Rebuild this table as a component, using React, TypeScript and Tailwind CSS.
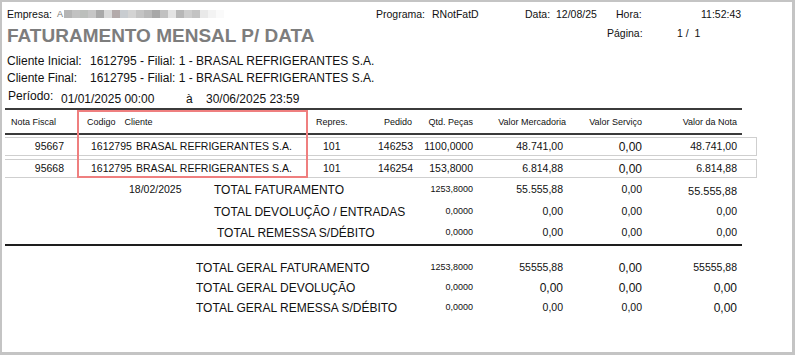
import React from 'react';

const mosaic = [
  '#b5b5b5', '#c2c2c2', '#bcbfbc', '#c6c6c6', '#a9a9a9', '#d9d9d9', '#b3aaaa',
  '#c8ccd0', '#d3d3d3', '#c4c4c4', '#b9b9b9', '#a8a8a8', '#c1c1c1', '#e3e3e3', '#b7b7b7',
  '#cdcdcd', '#c3c3c3', '#e9e9e9', '#f3f3f3', '#fafafa',
];

const rows = [
  { nf: '95667', cod: '1612795', cliente: 'BRASAL REFRIGERANTES S.A.', rep: '101', pedido: '146253', qtd: '1100,0000', merc: '48.741,00', serv: '0,00', nota: '48.741,00' },
  { nf: '95668', cod: '1612795', cliente: 'BRASAL REFRIGERANTES S.A.', rep: '101', pedido: '146254', qtd: '153,8000', merc: '6.814,88', serv: '0,00', nota: '6.814,88' },
];

interface ValuesProps {
  qtd: string;
  merc: string;
  serv: string;
  nota: string;
  mercSize?: string;
  servSize?: string;
  notaSize?: string;
}

const TotalValues: React.FC<ValuesProps> = ({ qtd, merc, serv, nota, mercSize = 'text-[10.5px]', servSize = 'text-[10.5px]', notaSize = 'text-[10.5px]' }) => (
  <>
    <div className="w-[60px] pr-[3px] text-right text-[9px]">{qtd}</div>
    <div className={`w-[92px] pr-[5px] text-right ${mercSize}`}>{merc}</div>
    <div className={`w-[76px] pr-[2px] text-right ${servSize}`}>{serv}</div>
    <div className={`w-[96px] pr-[3px] text-right ${notaSize}`}>{nota}</div>
  </>
);

export default function App() {
  return (
    <div className="w-[795px] h-[355px] bg-[#c4c4c4] pt-[2px] pl-[2px] pr-[3px] pb-[3px] font-['Liberation_Sans',Arial,sans-serif] text-[#111]">
      <div className="relative w-full h-full bg-white pl-[3px] overflow-hidden">
        {/* cabeçalho */}
        <div className="mt-[6px] pl-[2px] flex items-center h-[12px] text-[10.5px] leading-none whitespace-nowrap">
          <div className="w-[50px]">Empresa:</div>
          <div className="w-[319px] flex items-center">
            <span className="text-[9px] text-[#777] mr-[1px]">A</span>
            {mosaic.map((c, i) => (
              <div key={i} className="w-[8px] h-[8px]" style={{ backgroundColor: c }} />
            ))}
          </div>
          <div className="w-[56px]">Programa:</div>
          <div className="w-[93px]">RNotFatD</div>
          <div className="w-[31px]">Data:</div>
          <div className="w-[60px]">12/08/25</div>
          <div className="w-[85px]">Hora:</div>
          <div>11:52:43</div>
        </div>

        <div className="mt-[5px] pl-[2px] flex items-center h-[20px] whitespace-nowrap">
          <div className="w-[600px] text-[19px] font-bold text-[#7d7d7d] leading-none">FATURAMENTO MENSAL P/ DATA</div>
          <div className="w-[70px] text-[10.5px] -mt-[2px]">Página:</div>
          <div className="text-[10.5px] -mt-[2px] whitespace-pre">{'1 /  1'}</div>
        </div>

        <div className="mt-[9px] pl-[2px] flex items-center h-[14px] text-[12px] whitespace-nowrap">
          <div className="w-[83px]">Cliente Inicial:</div>
          <div>1612795 - Filial: 1 - BRASAL REFRIGERANTES S.A.</div>
        </div>
        <div className="mt-[3px] pl-[2px] flex items-center h-[14px] text-[12px] whitespace-nowrap">
          <div className="w-[83px]">Cliente Final:</div>
          <div>1612795 - Filial: 1 - BRASAL REFRIGERANTES S.A.</div>
        </div>
        <div className="mt-[4px] pl-[3px] flex items-start h-[16px] text-[12px] leading-[14px] whitespace-nowrap">
          <div className="w-[53px]">Período:</div>
          <div className="w-[125px] mt-[3px]">01/01/2025 00:00</div>
          <div className="w-[20px] mt-[3px]">à</div>
          <div className="mt-[3px]">30/06/2025 23:59</div>
        </div>

        {/* tabela */}
        <div className="mt-[3px] w-[737px] h-[2px] bg-[#3b3b3b]" />
        <div className="w-[737px] h-[23px] pt-[3px] flex items-center text-[9px] whitespace-nowrap">
          <div className="w-[72px] pl-[6px]">Nota Fiscal</div>
          <div className="w-[231px] pl-[10px] flex gap-[9px]">
            <span>Codigo</span>
            <span>Cliente</span>
          </div>
          <div className="w-[54px] pl-[8px]">Repres.</div>
          <div className="w-[54px] pr-[4px] text-right">Pedido</div>
          <div className="w-[60px] pr-[3px] text-right">Qtd. Peças</div>
          <div className="w-[92px] pr-[2px] text-right">Valor Mercadoria</div>
          <div className="w-[76px] pr-[2px] text-right">Valor Serviço</div>
          <div className="w-[96px] pr-[3px] text-right">Valor da Nota</div>
        </div>
        <div className="w-[737px] h-[2px] bg-[#3b3b3b]" />

        {rows.map((r, i) => (
          <div
            key={r.nf}
            className={`${i === 0 ? 'mt-[2px]' : 'mt-[3px]'} w-[752px] h-[19px] border border-l-0 border-[#cfcfcf] flex items-center text-[10.5px] whitespace-nowrap`}
          >
            <div className="w-[72px] pr-[13px] text-right">{r.nf}</div>
            <div className="w-[231px] pl-[14px] flex gap-[4px]">
              <span>{r.cod}</span>
              <span>{r.cliente}</span>
            </div>
            <div className="w-[54px] pl-[15px]">{r.rep}</div>
            <div className="w-[54px] pr-[3px] text-right">{r.pedido}</div>
            <div className="w-[60px] pr-[3px] text-right">{r.qtd}</div>
            <div className="w-[92px] pr-[5px] text-right">{r.merc}</div>
            <div className="w-[76px] pr-[2px] text-right text-[12px]">{r.serv}</div>
            <div className="w-[96px] pr-[3px] text-right">{r.nota}</div>
          </div>
        ))}

        {/* destaque */}
        <div className="absolute left-[75px] top-[108px] w-[231px] h-[68px] border-2 border-[#ef7f7f] pointer-events-none" />

        {/* totais */}
        <div className="mt-[1px] w-[737px] h-[22px] flex items-center whitespace-nowrap">
          <div className="w-[124px]" />
          <div className="w-[85px] text-[10.5px]">18/02/2025</div>
          <div className="w-[202px] text-[12px]">TOTAL FATURAMENTO</div>
          <TotalValues qtd="1253,8000" merc="55.555,88" serv="0,00" nota="55.555,88" notaSize="text-[11px] mt-[3px]" />
        </div>
        <div className="w-[737px] h-[22px] flex items-center whitespace-nowrap">
          <div className="w-[209px]" />
          <div className="w-[202px] text-[12px]">TOTAL DEVOLUÇÃO / ENTRADAS</div>
          <TotalValues qtd="0,0000" merc="0,00" serv="0,00" nota="0,00" />
        </div>
        <div className="w-[737px] h-[20px] flex items-center whitespace-nowrap">
          <div className="w-[212px]" />
          <div className="w-[199px] text-[12px]">TOTAL REMESSA S/DÉBITO</div>
          <TotalValues qtd="0,0000" merc="0,00" serv="0,00" nota="0,00" />
        </div>
        <div className="mt-[1px] w-[737px] h-[2px] bg-[#1e1e1e]" />

        <div className="mt-[12px] w-[737px] h-[20px] flex items-center whitespace-nowrap">
          <div className="w-[191px]" />
          <div className="w-[220px] text-[12px]">TOTAL GERAL FATURAMENTO</div>
          <TotalValues qtd="1253,8000" merc="55555,88" serv="0,00" nota="55555,88" servSize="text-[12px]" />
        </div>
        <div className="w-[737px] h-[20px] flex items-center whitespace-nowrap">
          <div className="w-[191px]" />
          <div className="w-[220px] text-[12px]">TOTAL GERAL DEVOLUÇÃO</div>
          <TotalValues qtd="0,0000" merc="0,00" serv="0,00" nota="0,00" mercSize="text-[12px]" servSize="text-[12px]" notaSize="text-[12px]" />
        </div>
        <div className="w-[737px] h-[20px] flex items-center whitespace-nowrap">
          <div className="w-[191px]" />
          <div className="w-[220px] text-[12px]">TOTAL GERAL REMESSA S/DÉBITO</div>
          <TotalValues qtd="0,0000" merc="0,00" serv="0,00" nota="0,00" notaSize="text-[12px]" />
        </div>
      </div>
    </div>
  );
}
